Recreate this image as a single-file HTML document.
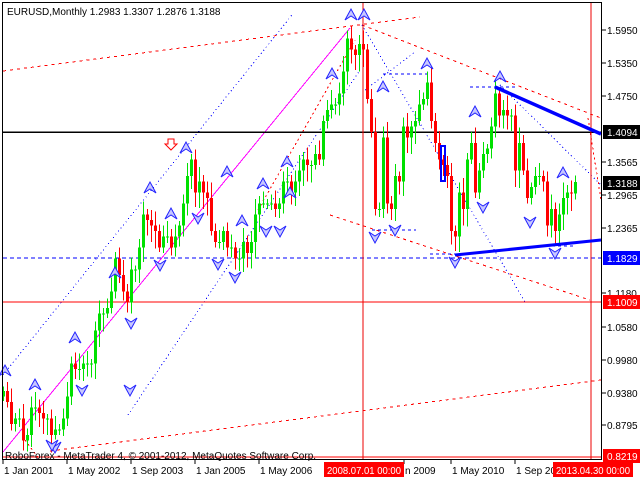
<!DOCTYPE html>
<html><head><meta charset="utf-8"><style>
html,body{margin:0;padding:0;background:#fff;width:640px;height:480px;overflow:hidden}
svg{display:block}
text{font-family:"Liberation Sans",sans-serif;font-size:10px}
</style></head><body>
<svg id="s" width="640" height="480" xmlns="http://www.w3.org/2000/svg" shape-rendering="crispEdges">
<rect x="0" y="0" width="640" height="480" fill="#fff"/>
<g id="lines" fill="none"></g>
<g id="candles"></g>
<g id="arrows"></g>
<g id="over"></g>
<rect x="2.5" y="2.5" width="599" height="457" fill="none" stroke="#000"/>
<g id="axis"></g>
</svg>
<script>
var NS="http://www.w3.org/2000/svg";
function el(p,t,a,txt){var e=document.createElementNS(NS,t);for(var k in a)e.setAttribute(k,a[k]);if(txt!=null)e.textContent=txt;document.getElementById(p).appendChild(e);return e;}
function Y(p){return 30+(1.595-p)/0.001815;}
function ln(g,x1,y1,x2,y2,c,w,d){var a={x1:x1,y1:y1,x2:x2,y2:y2,stroke:c,'stroke-width':w||1};if(d)a['stroke-dasharray']=d;el(g,'line',a);}
ln('lines',3,71,420,17,'#f00',1,'3,4');
ln('lines',3,375,292,15,'#00f',1,'1,3');
ln('lines',128,415,360,70,'#00f',1,'1,3');
ln('lines',3,452,350,28,'#f0f',1);
ln('lines',258,210,355,40,'#f00',1,'2,3');
ln('lines',50,451,601,380,'#f00',1,'3,4');
ln('lines',25,440,40,460,'#f00',1,'2,3');
ln('lines',362,25,601,118,'#f00',1,'3,4');
ln('lines',330,215,590,300,'#f00',1,'3,4');
ln('lines',362,25,525,302,'#00f',1,'1,3');
ln('lines',365,90,415,52,'#00f',1,'1,3');
ln('lines',500,85,601,185,'#00f',1,'1,3');
ln('lines',383,74,430,74,'#00f',1,'3,3');
ln('lines',372,230,416,230,'#00f',1,'3,3');
ln('lines',470,87,515,87,'#00f',1,'3,3');
ln('lines',430,254,470,254,'#00f',1,'3,3');
ln('lines',540,246,575,246,'#00f',1,'3,3');
ln('lines',3,132,601,132,'#000',1.5);
ln('lines',3,258,601,258,'#00f',1,'4,3');
ln('lines',3,302,601,302,'#f00',1.2);
ln('lines',3,457,601,457,'#f00',1.2);
ln('lines',363,3,363,459,'#e00',1.2);
ln('lines',591,3,591,459,'#e00',1.2);
ln('lines',588,118,601,200,'#f00',1,'2,3');
var cl=[0.94,0.92,0.88,0.89,0.89,0.85,0.86,0.91,0.91,0.90,0.89,0.89,
0.86,0.87,0.87,0.89,0.93,0.99,0.98,0.98,0.99,0.99,0.99,1.05,
1.08,1.08,1.09,1.12,1.18,1.15,1.12,1.10,1.16,1.16,1.20,1.26,
1.25,1.24,1.23,1.20,1.22,1.22,1.20,1.22,1.24,1.28,1.33,1.36,
1.30,1.32,1.30,1.29,1.23,1.21,1.21,1.23,1.20,1.20,1.18,1.18,
1.21,1.19,1.21,1.26,1.28,1.28,1.28,1.28,1.27,1.28,1.32,1.32,
1.30,1.32,1.34,1.36,1.35,1.35,1.37,1.36,1.43,1.45,1.46,1.46,
1.48,1.52,1.58,1.56,1.55,1.57,1.56,1.47,1.41,1.27,1.27,1.40,
1.28,1.27,1.33,1.32,1.42,1.40,1.42,1.43,1.46,1.47,1.50,1.43,
1.39,1.36,1.35,1.33,1.23,1.22,1.30,1.27,1.36,1.39,1.30,1.34,
1.37,1.38,1.42,1.48,1.44,1.45,1.44,1.44,1.34,1.39,1.34,1.29,
1.31,1.33,1.33,1.32,1.24,1.27,1.23,1.26,1.29,1.30,1.2983,1.3188];
var prev=0.93;
for(var i=0;i<cl.length;i++){
 var o=prev,c=cl[i],x=3+i*4;
 var r1=0.008+((i*37)%11)/500,r2=0.008+((i*53)%13)/500;
 var h=Math.max(o,c)+r1,l=Math.min(o,c)-r2;
 if(i==cl.length-1){o=1.2983;h=1.3307;l=1.2876;}
 var col=c>=o?'#00e000':'#f00';
 ln('candles',x+0.5,Y(h),x+0.5,Y(l),col,1);
 var yt=Y(Math.max(o,c)),yb=Y(Math.min(o,c));
 el('candles','rect',{x:x-1,y:yt,width:3,height:Math.max(1,yb-yt),fill:col});
 prev=c;
}
el('over','line',{x1:495,y1:87,x2:601,y2:134,stroke:'#00f','stroke-width':3.5,'shape-rendering':'auto'});
el('over','line',{x1:455,y1:255,x2:601,y2:240,stroke:'#00f','stroke-width':3,'shape-rendering':'auto'});
el('over','rect',{x:441,y:146,width:4,height:35,fill:'none',stroke:'#00f','stroke-width':2});
var ups=[[5,371],[35,385],[75,338],[115,273],[150,188],[171,214],[186,148],[227,172],[242,221],[263,184],[287,162],[290,193],[351,15],[364,15],[332,74],[383,87],[427,64],[475,112],[500,77],[563,173]];
var dns=[[55,447],[82,390],[131,323],[160,265],[198,218],[218,264],[235,277],[266,231],[280,231],[375,237],[395,230],[455,262],[483,207],[530,222],[555,253],[130,390],[52,445]];
ups.forEach(function(p){el('arrows','path',{d:'M'+(p[0]-6)+','+(p[1]+5)+' L'+p[0]+','+(p[1]-6)+' L'+(p[0]+6)+','+(p[1]+5)+' L'+p[0]+','+(p[1]+1)+'Z',fill:'#c8c8ff',stroke:'#22f','stroke-width':1,'shape-rendering':'auto'});});
dns.forEach(function(p){el('arrows','path',{d:'M'+(p[0]-6)+','+(p[1]-5)+' L'+p[0]+','+(p[1]+6)+' L'+(p[0]+6)+','+(p[1]-5)+' L'+p[0]+','+(p[1]-1)+'Z',fill:'#c8c8ff',stroke:'#22f','stroke-width':1,'shape-rendering':'auto'});});
el('arrows','path',{d:'M168,139 h6 v5 h3 l-6,6 l-6,-6 h3z',fill:'#fff',stroke:'#f00','stroke-width':1,'shape-rendering':'auto'});
el('axis','text',{x:7,y:15,fill:'#000'},'EURUSD,Monthly  1.2983 1.3307 1.2876 1.3188');
el('axis','text',{x:5,y:459,fill:'#000'},'RoboForex - MetaTrader 4, © 2001-2012, MetaQuotes Software Corp.');
var pr=[['1.5950',30],['1.5350',63],['1.4750',96],['1.3565',162],['1.2965',195],['1.2365',228],['1.1180',293],['1.0580',327],['0.9980',360],['0.9380',393],['0.8795',425]];
pr.forEach(function(p){ln('axis',602,p[1],606,p[1],'#000',1);el('axis','text',{x:607,y:p[1]+4,fill:'#000'},p[0]);});
var bx=[['1.4094',132,'#000'],['1.3188',183,'#000'],['1.1829',258,'#00f'],['1.1009',302,'#f00'],['0.8219',456,'#f00']];
bx.forEach(function(b){el('axis','rect',{x:603,y:b[1]-7,width:37,height:14,fill:b[2]});el('axis','text',{x:607,y:b[1]+4,fill:'#fff'},b[0]);});
var tl=[['1 Jan 2001',3],['1 May 2002',67],['1 Sep 2003',131],['1 Jan 2005',195],['1 May 2006',259],['n 2009',404],['1 May 2010',451],['1 Sep 20',515]];
tl.forEach(function(t){ln('axis',t[1],460,t[1],464,'#000',1);el('axis','text',{x:t[1]+1,y:474,fill:'#000'},t[0]);});
el('axis','rect',{x:324,y:462,width:80,height:15,fill:'#f00'});
el('axis','text',{x:327,y:474,fill:'#fff',textLength:74,lengthAdjust:'spacingAndGlyphs'},'2008.07.01 00:00');
el('axis','rect',{x:553,y:462,width:80,height:15,fill:'#f00'});
el('axis','text',{x:556,y:474,fill:'#fff',textLength:74,lengthAdjust:'spacingAndGlyphs'},'2013.04.30 00:00');
</script>
</body></html>
